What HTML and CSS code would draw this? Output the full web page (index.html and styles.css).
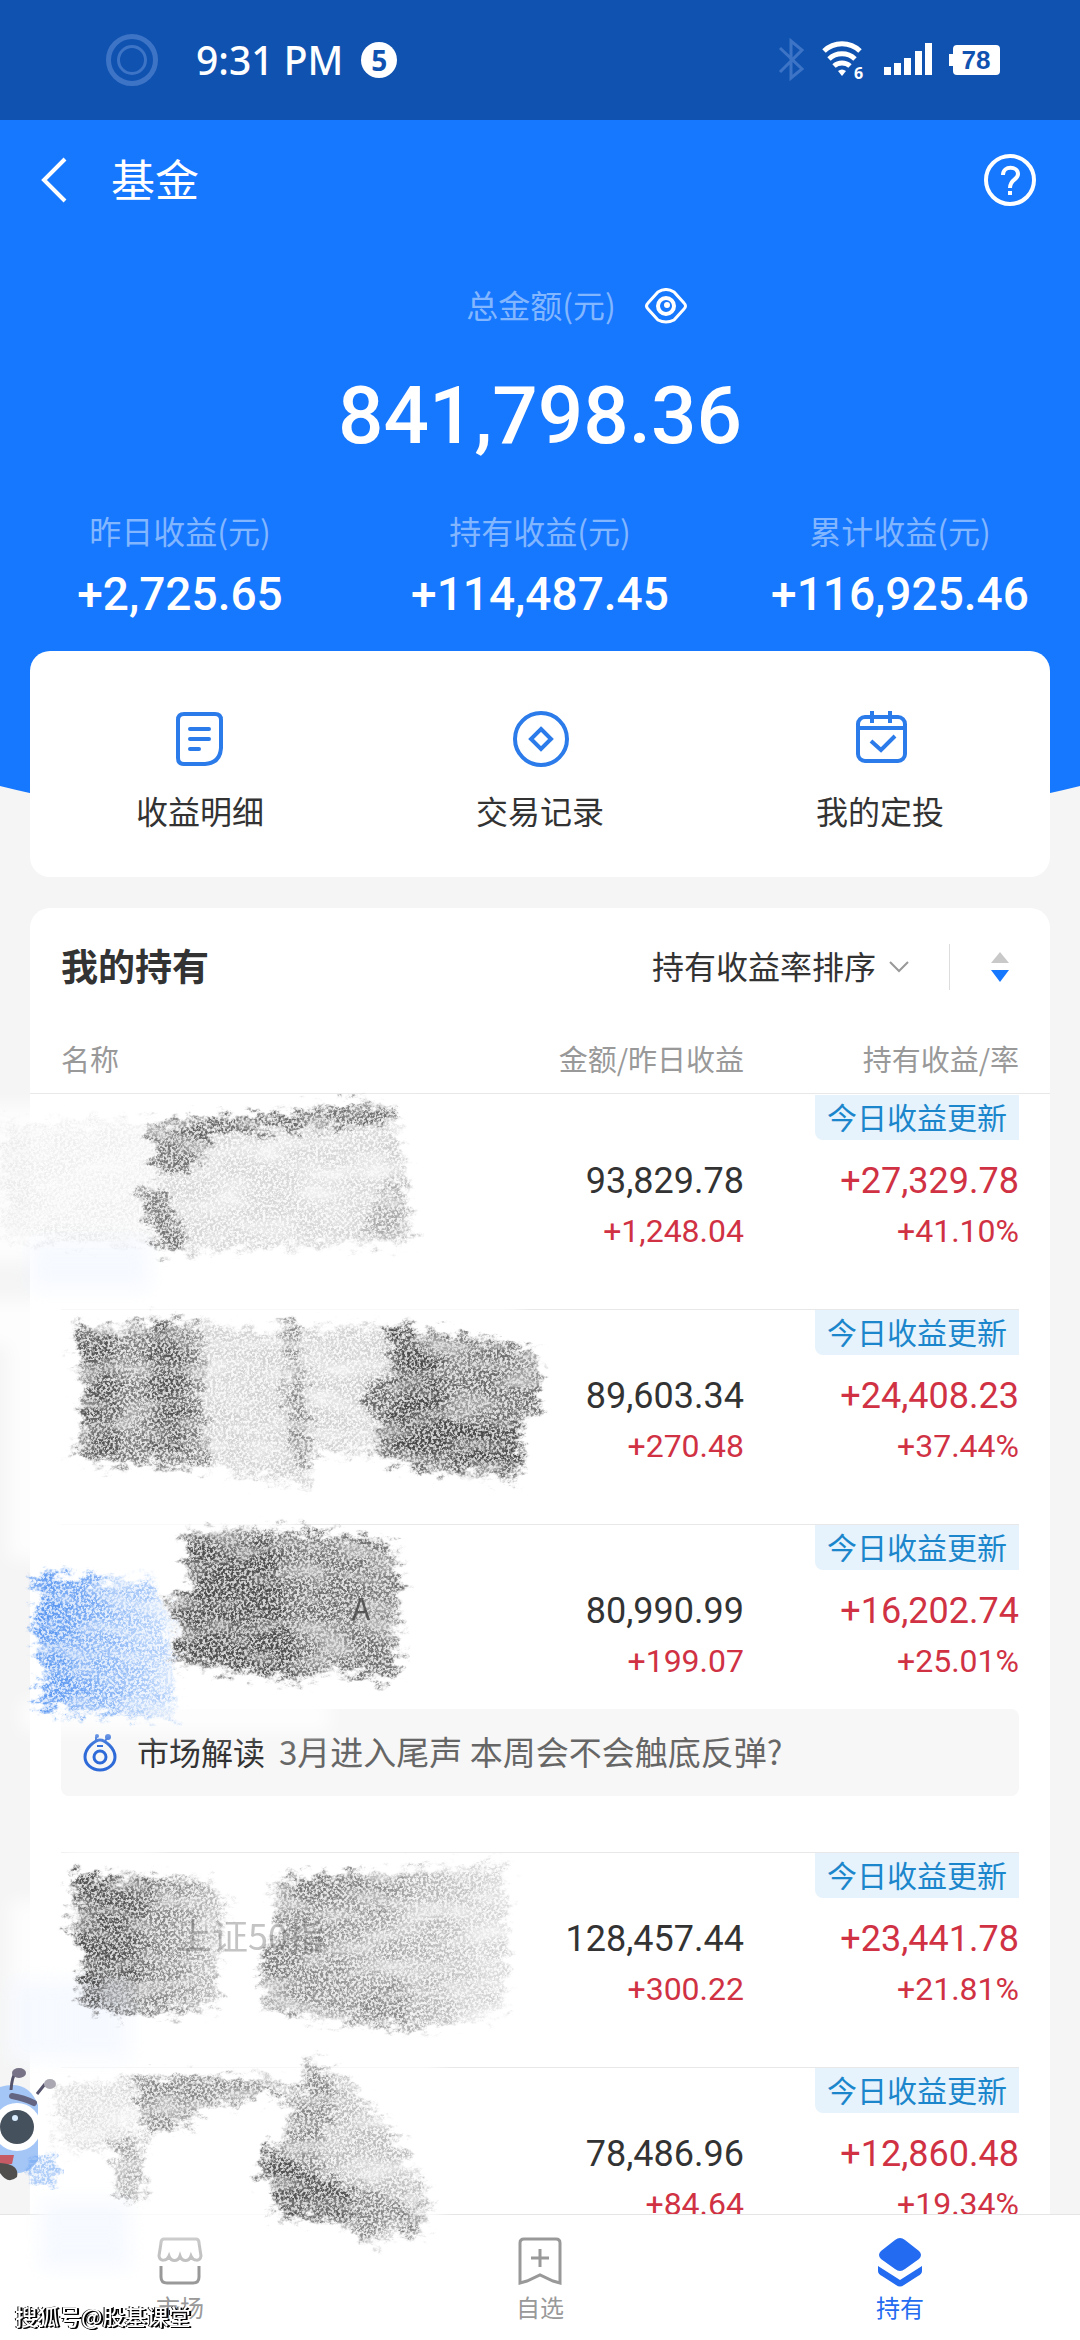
FILE: index.html
```html
<!DOCTYPE html>
<html lang="zh-CN">
<head>
<meta charset="utf-8">
<meta name="viewport" content="width=device-width, initial-scale=1">
<title>基金</title>
<link rel="stylesheet" href="styles.css">
</head>
<body>
<div class="status">
  <svg class="ring" viewBox="0 0 52 52" fill="none" stroke="#3d74c6"><circle cx="26" cy="26" r="23.500" stroke-width="5"/><circle cx="26" cy="26" r="13.500" stroke-width="3"/></svg>
  <span class="time">9:31 PM</span>
  <span class="count">5</span>
  <svg class="signals" viewBox="0 0 226 52" fill="#fff">
    <path d="M2 14 24 35 13 44V7l11 9L2 38" fill="none" stroke="#3d74c6" stroke-width="3"/>
    <g fill="none" stroke="#fff" stroke-width="5"><path d="M46 17a26 26 0 0 1 36 0"/><path d="M51 25a19 19 0 0 1 26 0"/><path d="M56 32a12 12 0 0 1 16 0"/></g>
    <path d="M60 37q4-3 8 0l-4 5z"/>
    <text x="76" y="45" class="mini">6</text>
    <path d="M106 33h7v8h-7zM116 29h7v12h-7zM126 24h7v17h-7zM137 17h7v24h-7zM147 9h7v32h-7z"/>
    <path d="M179 11h39q4 0 4 4v22q0 4-4 4h-39q-4 0-4-4v-5h-4V20h4v-5q0-4 4-4z"/>
    <text x="198" y="35" class="charge">78</text>
  </svg>
</div>

<main>
<section class="hero">
  <header class="topbar">
    <button class="plain back" aria-label="返回"><svg width="28" height="46" viewBox="0 0 28 46" fill="none" stroke="#fff" stroke-width="4"><path d="M25 2 4 23l21 21"/></svg></button>
    <h1>基金</h1>
    <button class="plain help" aria-label="帮助"><svg width="52" height="52" viewBox="0 0 52 52" fill="none" stroke="#fff" stroke-width="4"><circle cx="26" cy="26" r="24"/><path d="M19 21c0-10 15-9 15-1 0 6-8 5-8 14"/><path d="M24 39h4"/></svg></button>
  </header>
  <div class="total-label"><span>总金额(元)</span>
    <button class="plain" aria-label="显示金额"><svg width="44" height="36" viewBox="0 0 44 36" fill="none" stroke="#fff"><path d="M14 4q8-5 16 0l10 11q3 3 0 6L30 32q-8 4-16 0L4 21q-3-3 0-6z" stroke-width="3"/><circle cx="22" cy="18" r="8" stroke-width="4"/><circle cx="23" cy="17" r="3" fill="#fff" stroke="none"/></svg></button>
  </div>
  <p class="total">841,798.36</p>
  <dl class="stats">
    <div><dt>昨日收益(元)</dt><dd>+2,725.65</dd></div>
    <div><dt>持有收益(元)</dt><dd>+114,487.45</dd></div>
    <div><dt>累计收益(元)</dt><dd>+116,925.46</dd></div>
  </dl>
  <nav class="card actions">
    <a href="#detail"><svg viewBox="0 0 60 60"><path d="M14 5h31q6 0 6 6v28q-1 15-16 16H14q-6 0-6-6V11q0-6 6-6z"/><path d="M20 20h19M20 30h19M20 40h9" stroke-linecap="round"/></svg>收益明细</a>
    <a href="#records"><svg viewBox="0 0 60 60"><circle cx="31" cy="30" r="26"/><path d="m31 20 10 10-10 10-10-10z"/></svg>交易记录</a>
    <a href="#plan"><svg viewBox="0 0 60 60"><rect x="8" y="8" width="47" height="44" rx="7"/><path d="M8 19h47M22 2v12M40 2v12M21 32l10 9 14-14"/></svg>我的定投</a>
  </nav>
</section>

<section class="card holdings">
  <div class="holdings-head">
    <h2>我的持有</h2>
    <div class="sorting">
      <select aria-label="排序方式"><option>持有收益率排序</option></select>
      <svg width="20" height="14" viewBox="0 0 20 14" fill="none" stroke="#999" stroke-width="2"><path d="m1 2 9 9 9-9"/></svg>
      <button class="plain order" aria-label="切换升降序"><svg width="20" height="32" viewBox="0 0 20 32"><path d="M10 1 19 12H1z" fill="#c9c9c9"/><path d="M1 19h18l-9 12z" fill="#1677ff"/></svg></button>
    </div>
  </div>
  <table>
    <thead><tr><th class="name">名称</th><th class="amount">金额/昨日收益</th><th class="profit">持有收益/率</th></tr></thead>
    <tbody>
      <tr><td></td><td class="amount"><b>93,829.78</b><i>+1,248.04</i></td><td class="profit"><span class="tag">今日收益更新</span><b>+27,329.78</b><i>+41.10%</i></td></tr>
      <tr><td></td><td class="amount"><b>89,603.34</b><i>+270.48</i></td><td class="profit"><span class="tag">今日收益更新</span><b>+24,408.23</b><i>+37.44%</i></td></tr>
      <tr class="noted"><td></td><td class="amount"><b>80,990.99</b><i>+199.07</i></td><td class="profit"><span class="tag">今日收益更新</span><b>+16,202.74</b><i>+25.01%</i></td></tr>
      <tr class="note"><td colspan="3"><a href="#market">
        <svg width="34" height="40" viewBox="0 0 34 40" fill="none" stroke="#2f6bd8" stroke-width="3"><path d="M17 7c5 0 15 8 15 17a15 13 0 0 1-30 0C2 15 12 7 17 7z"/><circle cx="17" cy="24" r="6"/><path d="M14 13h6" stroke-width="2"/><path d="M13 8V4M22 8l3-4" stroke-width="2"/><circle cx="14" cy="3" r="2" fill="#2f6bd8" stroke="none"/><circle cx="25" cy="4" r="3" fill="#2f6bd8" stroke="none"/></svg>
        <strong>市场解读</strong><span>3月进入尾声 本周会不会触底反弹?</span></a></td></tr>
      <tr><td></td><td class="amount"><b>128,457.44</b><i>+300.22</i></td><td class="profit"><span class="tag">今日收益更新</span><b>+23,441.78</b><i>+21.81%</i></td></tr>
      <tr><td></td><td class="amount"><b>78,486.96</b><i>+84.64</i></td><td class="profit"><span class="tag">今日收益更新</span><b>+12,860.48</b><i>+19.34%</i></td></tr>
    </tbody>
  </table>

  <!-- chalk strokes hiding the fund names -->
  <svg class="chalk" width="600" height="1200" viewBox="0 1080 600 1200" aria-hidden="true">
    <defs>
      <filter id="grain" x="-10%" y="-10%" width="120%" height="120%">
        <feGaussianBlur in="SourceGraphic" stdDeviation="3" result="feather"/>
        <feTurbulence type="fractalNoise" baseFrequency="0.07 0.12" numOctaves="4" seed="4" result="warp"/>
        <feDisplacementMap in="feather" in2="warp" scale="34" xChannelSelector="R" yChannelSelector="G" result="rough"/>
        <feTurbulence type="fractalNoise" baseFrequency="0.38" numOctaves="3" seed="9"/>
        <feColorMatrix values="0 0 0 0 0  0 0 0 0 0  0 0 0 0 0  4.5 0 0 0 -1.8" result="dots"/>
        <feTurbulence type="fractalNoise" baseFrequency="0.02 0.05" numOctaves="3" seed="21"/>
        <feColorMatrix values="0 0 0 0 0  0 0 0 0 0  0 0 0 0 0  3.2 0 0 0 -0.8" result="patches"/>
        <feComposite in="rough" in2="dots" operator="in" result="speckle"/>
        <feComposite in="speckle" in2="patches" operator="in" result="worn"/>
        <feComponentTransfer in="rough" result="base"><feFuncA type="linear" slope="0.28"/></feComponentTransfer>
        <feComponentTransfer in="speckle" result="dust"><feFuncA type="linear" slope="0.5"/></feComponentTransfer>
        <feMerge><feMergeNode in="base"/><feMergeNode in="dust"/><feMergeNode in="worn"/></feMerge>
      </filter>
      <filter id="soft" x="-20%" y="-20%" width="140%" height="140%"><feGaussianBlur stdDeviation="9"/></filter>
      <linearGradient id="blue"><stop offset="0" stop-color="#5090f0"/><stop offset="1" stop-color="#8ab6f6" stop-opacity=".35"/></linearGradient>
      <linearGradient id="dusk"><stop offset="0" stop-color="#444" stop-opacity=".9"/><stop offset="1" stop-color="#555" stop-opacity=".22"/></linearGradient>
    </defs>
    <g fill="#fff" filter="url(#soft)" opacity=".8">
      <path d="M-20 1105H420V1262H-20zM-20 1300H520V1345H-20zM8 1345H90V1560H8zM60 1512H290V1545H60zM20 1700H330V1732H20zM60 1842H160V1862H60zM10 1900H60V2060H10zM40 2060H440V2232H40z"/>
    </g>
    <path d="M30 1240H150V1290H30zM10 1980H130V2060H10zM40 2200H130V2270H40z" fill="#eef4ff" opacity=".5" filter="url(#soft)"/>
    <text x="176" y="1950" class="ghost">上证50指</text>
    <text x="352" y="1620" class="ghost dark">A</text>
    <g filter="url(#grain)" fill="#444">
      <path d="M0 1122 150 1120 158 1248 0 1240z" opacity=".05"/>
      <path d="m155 1128 240-12 10 64 8 55-13 8-130 5-112 4v-27z" opacity=".13"/>
      <path d="m148 1124 122-9 60-9 63 1 2 14-95 7-100 6-50 0z" opacity=".6"/>
      <path d="m155 1130 58 0-20 42-38-2zM140 1188l22 4 12 30-6 8-20-6zM158 1225l25 2v26h-25z" opacity=".5"/>
      <path d="m390 1125 8 60 12 50-45 8 4-30 24-40z" opacity=".2"/>

      <path d="m75 1325 40 6 40-12 45 5 4 140-104 2-28-14 12-12-6-40 8-20-9-14 8-20z" opacity=".5"/>
      <path d="m78 1328 37 8 5 120-36 0-4-110zM150 1325l38 10-5 115-30 0z" opacity=".55"/>
      <path d="m200 1322 70 14 20-8 100-2-8 122-72 8v30l-115-22z" opacity=".15"/>
      <path d="m276 1324 26 4-5 30-14-6zM285 1365l20 0 6 100-18 0z" opacity=".35"/>
      <path d="m388 1325 138 22 12 24v40l-18 14v53l-100-8-46-14 6-31-14-25 2-15 20-4z" opacity=".6"/>
      <path d="m390 1328 40 20 20 75 68 0v52l-140-28 4-24 20-20z" opacity=".75"/>

      <path d="m187 1532 73-2 105 8 33 12-12 15 15 5-6 70 3 30-13 12-14-7-54-6-3 14-140-21 6-22-12-40 22-10z" opacity=".6"/>
      <path d="m190 1540 85 5 10 85 14 44-122-16 6-18-12-36 24-12z" opacity=".7"/>
      <path d="m32 1575 118 6 14 18 10 80 2 40-106-6-35-11 14-12-10-40-5-30 8-20z" fill="url(#blue)"/>

      <path d="m68 1875 142 6 14 20-9 108-105 4-32-13 7-30-13-55 8-10z" fill="url(#dusk)"/>
      <path d="m72 1875 82 6-12 60-8 55-48-8z" opacity=".4"/>
      <path d="m275 1880 85-7 145-8v145l-75 18h-50l-112-20-8-48 20-30z" fill="url(#dusk)" opacity=".6"/>
      <path d="m280 1880 80-6 44 10-20 30-40-18-64-4zM358 2000l50-20 0 48-25 0z" opacity=".2"/>

      <path d="m55 2085 80-5-5 70-70 0z" opacity=".09"/>
      <path d="m128 2077 152 3 5 10-75 16-28 22-42 0-2-30z" opacity=".45"/>
      <path d="m113 2140 30-4-2 65-22-2z" opacity=".3"/>
      <path d="m313 2058 37 27 40 45 40 70-10 35-20-3-25 13-45-25-55-5 3-25-20-15 12-25 20-20-5-43 20 8z" opacity=".22"/>
      <path d="m308 2062 30 30-20 50 10 40 72 18-25 40-45-22-55-3 3-25-20-15 12-25 22-20z" opacity=".3"/>
      <path d="m270 2150 30 20 50 20-5 30-70-5 3-25-18-15z" opacity=".65"/>
      <path d="m398 2205 22 8 2 24-20-4z" opacity=".45"/>
    </g>
    <!-- floating mascot -->
    <g class="mascot">
      <path d="M0 2087q28-8 38 18v55q-10 18-38 12z" fill="#a4c6f6"/>
      <path d="M11 2090q1-14 5-18M37 2094l8-10" fill="none" stroke="#55536b" stroke-width="3"/>
      <ellipse cx="19" cy="2073" rx="7" ry="5" fill="#777286"/><ellipse cx="50" cy="2084" rx="6" ry="5" fill="#aaa7b2"/>
      <path d="M12 2096q12 2 22 7" fill="none" stroke="#646582" stroke-width="6" stroke-linecap="round"/>
      <circle cx="17" cy="2127" r="24" fill="#fff"/><circle cx="17" cy="2127" r="17" fill="#46515e"/><circle cx="15" cy="2118" r="3" fill="#d9edff"/>
      <path d="M0 2155h14l-2 9-12 1z" fill="#c65b66"/><path d="M0 2163q20 1 17 14-9 8-17-4z" fill="#514f4d"/>
      <circle cx="44" cy="2170" r="16" fill="#6fa5f2" opacity=".6" filter="url(#grain)"/>
    </g>
  </svg>
</section>
</main>

<nav class="tabs">
  <a href="#market"><svg viewBox="0 0 48 50"><path d="M8 2h32q3 0 3 4l2 13c-1 6-8 5-10 0-2 6-9 6-11 0-2 6-9 6-11 0-2 5-9 6-10 0L5 6q0-4 3-4" opacity=".6"/><path d="M5 29v11q0 6 6 6h26q6 0 6-6V29"/></svg>市场</a>
  <a href="#watch"><svg viewBox="0 0 48 50"><path d="M8 2h32q4 0 4 4v40l-7-2-13-6-13 6-7 2V6q0-4 4-4zM24 12v18M15 21h18"/></svg>自选</a>
  <a href="#holdings" class="active"><svg viewBox="0 0 48 50"><path d="M19 3q5-4 10 0l14 11q4 4 0 8L29 32q-5 4-10 0L5 22q-4-4 0-8zM2 29l22 14 22-14v5q0 3-4 5L28 48q-4 3-8 0L6 39q-4-2-4-5z"/></svg>持有</a>
</nav>
<div class="credit">搜狐号@股基课堂</div>
</body>
</html>
```
FILE: styles.css
```css
* { box-sizing: border-box; }
body, h1, h2, p, dl, dd { margin: 0; }
body {
  min-height: 100vh;
  background: #f5f5f5;
  color: #333;
  font-family: "Noto Sans CJK SC", sans-serif;
  font-size: 32px;
  line-height: 44px;
}
a { color: inherit; text-decoration: none; }
svg { display: block; flex: none; }
.plain { padding: 0; border: 0; background: none; color: inherit; cursor: pointer; }

.status {
  display: flex;
  align-items: center;
  height: 120px;
  padding: 0 76px 0 106px;
  background: #1052b0;
  color: #fff;
}
.ring { width: 52px; height: 52px; }
.time { margin-left: 38px; font: 500 39px/44px "Noto Sans", sans-serif; }
.count {
  width: 36px;
  height: 36px;
  margin-left: 18px;
  border-radius: 50%;
  background: #fff;
  color: #1052b0;
  font: 700 28px/36px "Noto Sans", sans-serif;
  text-align: center;
}
.signals { width: 226px; height: 52px; margin-left: auto; }
.mini { font: 700 16px "Noto Sans", sans-serif; }
.charge { font: 700 26px "Liberation Sans", sans-serif; fill: #1052b0; text-anchor: middle; }

.hero { position: relative; z-index: 0; overflow: hidden; color: #fff; }
.hero::before {
  content: "";
  position: absolute;
  z-index: -1;
  top: 0;
  left: -50%;
  width: 200%;
  height: 728px;
  border-radius: 0 0 50% 50% / 0 0 463px 463px;
  background: #1677ff;
}
.topbar { display: flex; align-items: center; height: 120px; padding: 0 44px 0 40px; }
.topbar h1 { margin-left: 43px; padding-bottom: 4px; font-size: 44px; line-height: 60px; font-weight: 400; }
.help { margin-left: auto; }
.total-label {
  display: flex;
  justify-content: center;
  align-items: center;
  gap: 28px;
  height: 44px;
  margin: 44px 0 0 74px;
}
.total-label span { padding-bottom: 4px; }
.total-label span, .stats dt { color: #82b6ff; }
.total {
  margin-top: 40px;
  font: 500 80px/96px Roboto, sans-serif;
  text-align: center;
}
.stats { display: grid; grid-template-columns: repeat(3, 1fr); margin-top: 44px; text-align: center; }
.stats dd { margin-top: 14px; font: 500 46px/56px Roboto, sans-serif; }

.card { margin: 0 30px; border-radius: 20px; background: #fff; }
.actions {
  display: grid;
  grid-template-columns: repeat(3, 1fr);
  margin-top: 29px;
  padding: 58px 0 45px;
  color: #333;
}
.actions a { display: flex; flex-direction: column; align-items: center; gap: 19px; }
.actions svg { width: 60px; height: 60px; fill: none; stroke: #2b7bea; stroke-width: 4; }

.holdings { position: relative; margin-top: 31px; padding: 0 31px; }
.holdings-head { display: flex; justify-content: space-between; align-items: center; height: 118px; }
.holdings-head h2 { padding-bottom: 4px; font-size: 37px; font-weight: 700; line-height: 52px; }
.sorting { display: flex; align-items: center; }
.sorting select {
  appearance: none;
  margin: 0 12px 0 0;
  padding: 0 0 4px;
  border: 0;
  background: none;
  color: #333;
  font: inherit;
}
.order {
  display: flex;
  justify-content: flex-end;
  align-items: center;
  width: 70px;
  height: 46px;
  margin-left: 40px;
  padding-right: 9px;
  border-left: 1px solid #ddd;
}

table { width: 100%; border-collapse: separate; border-spacing: 0; table-layout: fixed; }
thead tr { height: 68px; }
th {
  position: relative;
  padding: 0 0 4px;
  border-bottom: 1px solid #e8e8e8;
  color: #999;
  font-size: 29px;
  font-weight: 400;
  line-height: 40px;
  vertical-align: middle;
}
th.name::after, th.profit::after {
  content: "";
  position: absolute;
  bottom: -1px;
  width: 31px;
  height: 1px;
  background: #e8e8e8;
}
th.name::after { left: -31px; }
th.profit::after { right: -31px; }
.name { text-align: left; }
.amount { width: 300px; text-align: right; }
.profit { width: 275px; text-align: right; }
tbody tr { height: 215px; }
td { padding: 0; border-top: 1px solid #e8e8e8; vertical-align: top; }
tbody tr:first-child td { border-top-color: transparent; }
td b, td i { display: block; font-family: Roboto, sans-serif; font-style: normal; font-weight: 400; }
td b { font-size: 36px; line-height: 44px; }
td i { margin-top: 8px; color: #d03244; font-size: 32px; line-height: 40px; }
td.amount { padding-top: 64px; }
td.profit b { margin-top: 19px; color: #d03244; }
.tag {
  display: block;
  width: 204px;
  height: 45px;
  margin-left: auto;
  border-radius: 0 0 0 8px;
  background: #e6f3fc;
  color: #1b86cb;
  font-size: 30px;
  line-height: 42px;
  text-align: center;
}
tbody .noted { height: 185px; }
tbody .note { height: 143px; }
.note td { border: 0; }
.note a {
  display: flex;
  align-items: center;
  height: 87px;
  padding-left: 22px;
  border-radius: 8px;
  background: #f7f7f7;
  color: #666;
}
.note strong { margin: 0 16px 0 20px; padding-bottom: 4px; color: #333; font-weight: 400; }
.note span { padding-bottom: 4px; font-size: 33px; }
.note strong + span { margin-left: -2px; }

.chalk { position: absolute; z-index: 2; top: 172px; left: -30px; pointer-events: none; }
.ghost { font: 36px "Noto Sans CJK SC", sans-serif; fill: #c4c4c4; }
.dark { font-size: 30px; fill: #666; }

.tabs {
  position: fixed;
  z-index: 1;
  right: 0;
  bottom: 0;
  left: 0;
  display: grid;
  grid-template-columns: repeat(3, 1fr);
  height: 126px;
  border-top: 1px solid #e5e5e5;
  background: #fff;
  color: #999;
  font-size: 24px;
  line-height: 32px;
}
.tabs a { display: flex; flex-direction: column; align-items: center; gap: 4px; padding-top: 22px; }
.tabs svg { width: 48px; height: 50px; fill: none; stroke: currentColor; stroke-width: 3; }
.tabs .active { color: #236bf0; }
.tabs .active svg { fill: currentColor; stroke: none; }

.credit {
  position: fixed;
  z-index: 3;
  bottom: 9px;
  left: 15px;
  color: #fff;
  font-size: 22px;
  font-weight: 500;
  line-height: 32px;
  text-shadow: 1px 1px #000, 2px 1px #000, -1px 0 #000;
}
```
